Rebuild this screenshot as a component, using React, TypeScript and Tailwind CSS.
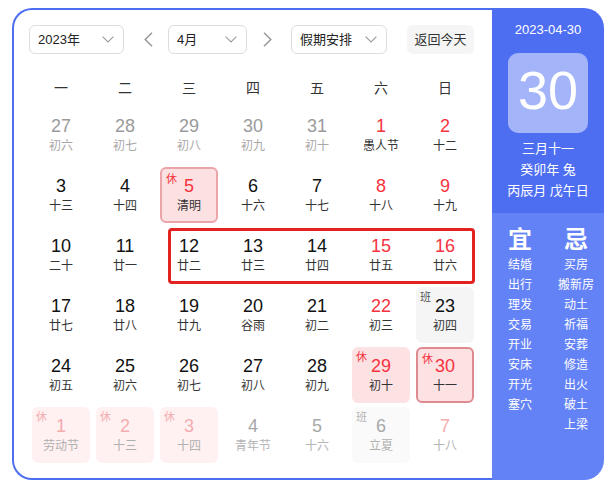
import React from "react";

type Kind =
  | "prev"
  | "norm"
  | "red"
  | "hol"
  | "holB"
  | "holSel"
  | "work"
  | "nHol"
  | "nNorm"
  | "nWork"
  | "nRed";

type Day = { n: number; l: string; k: Kind };

const STYLES: Record<
  Kind,
  { box: string; num: string; lun: string; tag?: string; tagCls?: string }
> = {
  prev: { box: "", num: "text-[#9a9a9a]", lun: "text-[#a8a8a8]" },
  norm: { box: "", num: "text-[#111]", lun: "text-[#333]" },
  red: { box: "", num: "text-[#f5333f]", lun: "text-[#333]" },
  hol: {
    box: "bg-[#fde2e3]",
    num: "text-[#f5333f]",
    lun: "text-[#333]",
    tag: "休",
    tagCls: "text-[#f5333f]",
  },
  holB: {
    box: "bg-[#fce1e2] border-2 border-[#eba4a8]",
    num: "text-[#f5333f]",
    lun: "text-[#333]",
    tag: "休",
    tagCls: "text-[#f5333f]",
  },
  holSel: {
    box: "bg-[#fde2e3] border-2 border-[#de8a90]",
    num: "text-[#f5333f]",
    lun: "text-[#333]",
    tag: "休",
    tagCls: "text-[#f5333f]",
  },
  work: {
    box: "bg-[#f5f5f6]",
    num: "text-[#111]",
    lun: "text-[#333]",
    tag: "班",
    tagCls: "text-[#555]",
  },
  nHol: {
    box: "bg-[#fff1f1]",
    num: "text-[#f4acb0]",
    lun: "text-[#b0b0b0]",
    tag: "休",
    tagCls: "text-[#f4acb0]",
  },
  nNorm: { box: "", num: "text-[#a8a8a8]", lun: "text-[#b5b5b5]" },
  nWork: {
    box: "bg-[#fafafa]",
    num: "text-[#a8a8a8]",
    lun: "text-[#b0b0b0]",
    tag: "班",
    tagCls: "text-[#b5b5b5]",
  },
  nRed: { box: "", num: "text-[#f4acb0]", lun: "text-[#b5b5b5]" },
};

const DAYS: Day[] = [
  { n: 27, l: "初六", k: "prev" },
  { n: 28, l: "初七", k: "prev" },
  { n: 29, l: "初八", k: "prev" },
  { n: 30, l: "初九", k: "prev" },
  { n: 31, l: "初十", k: "prev" },
  { n: 1, l: "愚人节", k: "red" },
  { n: 2, l: "十二", k: "red" },

  { n: 3, l: "十三", k: "norm" },
  { n: 4, l: "十四", k: "norm" },
  { n: 5, l: "清明", k: "holB" },
  { n: 6, l: "十六", k: "norm" },
  { n: 7, l: "十七", k: "norm" },
  { n: 8, l: "十八", k: "red" },
  { n: 9, l: "十九", k: "red" },

  { n: 10, l: "二十", k: "norm" },
  { n: 11, l: "廿一", k: "norm" },
  { n: 12, l: "廿二", k: "norm" },
  { n: 13, l: "廿三", k: "norm" },
  { n: 14, l: "廿四", k: "norm" },
  { n: 15, l: "廿五", k: "red" },
  { n: 16, l: "廿六", k: "red" },

  { n: 17, l: "廿七", k: "norm" },
  { n: 18, l: "廿八", k: "norm" },
  { n: 19, l: "廿九", k: "norm" },
  { n: 20, l: "谷雨", k: "norm" },
  { n: 21, l: "初二", k: "norm" },
  { n: 22, l: "初三", k: "red" },
  { n: 23, l: "初四", k: "work" },

  { n: 24, l: "初五", k: "norm" },
  { n: 25, l: "初六", k: "norm" },
  { n: 26, l: "初七", k: "norm" },
  { n: 27, l: "初八", k: "norm" },
  { n: 28, l: "初九", k: "norm" },
  { n: 29, l: "初十", k: "hol" },
  { n: 30, l: "十一", k: "holSel" },

  { n: 1, l: "劳动节", k: "nHol" },
  { n: 2, l: "十三", k: "nHol" },
  { n: 3, l: "十四", k: "nHol" },
  { n: 4, l: "青年节", k: "nNorm" },
  { n: 5, l: "十六", k: "nNorm" },
  { n: 6, l: "立夏", k: "nWork" },
  { n: 7, l: "十八", k: "nRed" },
];

const WEEK = ["一", "二", "三", "四", "五", "六", "日"];
const YI = ["结婚", "出行", "理发", "交易", "开业", "安床", "开光", "塞穴"];
const JI = ["买房", "搬新房", "动土", "祈福", "安葬", "修造", "出火", "破土", "上梁"];

function ChevronDown() {
  return (
    <svg width="12" height="7" viewBox="0 0 12 7" fill="none">
      <polyline
        points="0.6,0.6 6,6 11.4,0.6"
        stroke="#9a9a9a"
        strokeWidth="1.1"
        fill="none"
      />
    </svg>
  );
}

function Arrow({ dir }: { dir: "l" | "r" }) {
  return (
    <svg width="9" height="15" viewBox="0 0 9 15" fill="none">
      <polyline
        points={dir === "l" ? "8,0.8 1.2,7.5 8,14.2" : "1,0.8 7.8,7.5 1,14.2"}
        stroke="#999"
        strokeWidth="1.5"
        fill="none"
      />
    </svg>
  );
}

function Select({ label, w }: { label: string; w: string }) {
  return (
    <div
      className={`flex h-[29px] items-center justify-between rounded-[6px] border border-[#dcdde0] pl-[8px] pr-[9px] text-[13px] text-[#222] ${w}`}
    >
      <span className="leading-[16px]">{label}</span>
      <ChevronDown />
    </div>
  );
}

function Cell({ d }: { d: Day }) {
  const s = STYLES[d.k];
  return (
    <div
      className={`relative flex h-[56px] w-[58px] flex-col items-center justify-center rounded-[6px] ${s.box}`}
    >
      {s.tag && (
        <span
          className={`absolute left-[4px] top-[3px] text-[11px] leading-[14px] ${s.tagCls}`}
        >
          {s.tag}
        </span>
      )}
      <span className={`text-[18px] leading-[22px] ${s.num}`}>{d.n}</span>
      <span className={`text-[12px] leading-[18px] ${s.lun}`}>{d.l}</span>
    </div>
  );
}

export default function App() {
  return (
    <div
      className="min-h-[483px] w-[611px] bg-white pl-[12px] pt-[8px]"
      style={{ fontFamily: '"Liberation Sans", "Noto Sans CJK SC", sans-serif' }}
    >
      <div className="flex h-[472px] w-[592px]">
        {/* Left calendar */}
        <div className="relative w-[480px] rounded-l-[20px] border-y-2 border-l-2 border-[#4e6ef2] bg-white pl-[15px] pt-[15px]">
          <div className="flex items-center">
            <Select label="2023年" w="w-[95px]" />
            <div className="flex h-[29px] w-[44px] items-center pl-[20px]">
              <Arrow dir="l" />
            </div>
            <Select label="4月" w="w-[79px]" />
            <div className="flex h-[29px] w-[44px] items-center pl-[16px]">
              <Arrow dir="r" />
            </div>
            <Select label="假期安排" w="w-[96px]" />
            <div className="ml-[20px] flex h-[29px] w-[67px] items-center justify-center rounded-[6px] bg-[#f5f5f6] text-[13px] text-[#333]">
              返回今天
            </div>
          </div>

          <div className="mt-[16px] grid h-[36px] grid-cols-[repeat(7,64px)] items-center justify-items-center text-[14px] text-[#333]">
            {WEEK.map((w) => (
              <span key={w}>{w}</span>
            ))}
          </div>

          <div className="mt-[1px] grid grid-cols-[repeat(7,64px)] justify-items-center gap-y-[4px]">
            {DAYS.map((d, i) => (
              <Cell key={i} d={d} />
            ))}
          </div>

          {/* annotation box */}
          <div className="pointer-events-none absolute left-[154px] top-[218px] h-[56px] w-[307px] rounded-[4px] border-[3px] border-[#e3231f]" />
        </div>

        {/* Right panel */}
        <div className="flex w-[112px] flex-col overflow-hidden rounded-r-[20px] text-white">
          <div className="flex h-[205px] flex-col items-center bg-[#4e6ef2] pt-[12px]">
            <div className="text-[13px] leading-[20px]">2023-04-30</div>
            <div className="mt-[13px] flex h-[80px] w-[80px] items-center justify-center rounded-[10px] bg-[#a3b4f9] pb-[6px] text-[54px] leading-none">
              30
            </div>
            <div className="mt-[5px] flex flex-col items-center text-[13px] leading-[21px]">
              <span>三月十一</span>
              <span>癸卯年 兔</span>
              <span>丙辰月 戊午日</span>
            </div>
          </div>
          <div className="flex flex-1 bg-[#6382f6] pt-[12px]">
            <div className="flex w-[56px] flex-col items-center">
              <span className="text-[24px] font-bold leading-[30px]">宜</span>
              {YI.map((t) => (
                <span key={t} className="text-[12px] leading-[20px]">
                  {t}
                </span>
              ))}
            </div>
            <div className="flex w-[56px] flex-col items-center">
              <span className="text-[24px] font-bold leading-[30px]">忌</span>
              {JI.map((t) => (
                <span key={t} className="text-[12px] leading-[20px]">
                  {t}
                </span>
              ))}
            </div>
          </div>
        </div>
      </div>
    </div>
  );
}
